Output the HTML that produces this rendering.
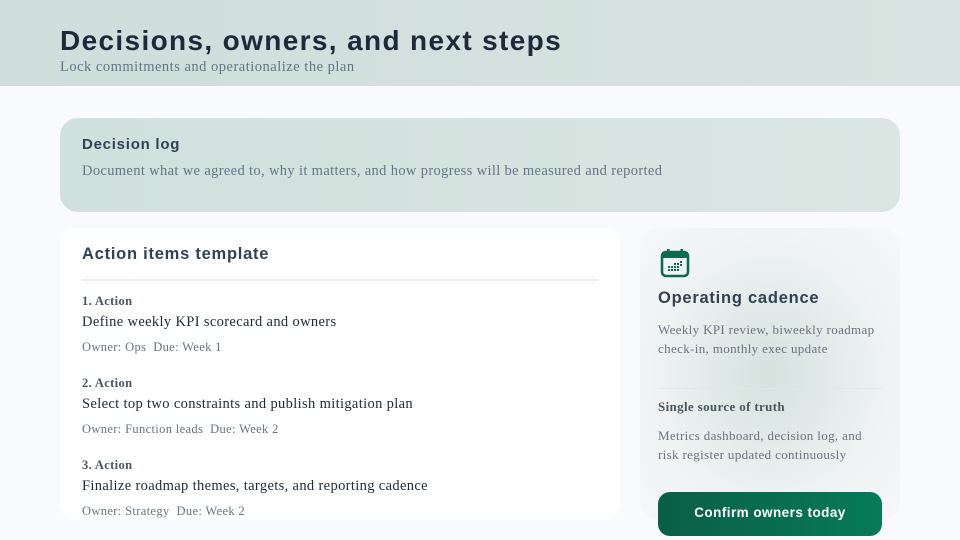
<!DOCTYPE html>
<html><head><meta charset="utf-8"><style>
*{margin:0;padding:0;box-sizing:border-box}
body{width:960px;height:540px;overflow:hidden;background:#f8fafc;position:relative;font-family:"Liberation Serif",serif;letter-spacing:0.35px}
.sans{font-family:"Liberation Sans",sans-serif;font-weight:700;color:#1f2937;letter-spacing:0.75px}
.hdr{position:absolute;left:0;top:0;width:960px;height:86px;background:linear-gradient(90deg,#cfdedb,#d8e4e1)}
.hdr h1{position:absolute;left:60px;top:25px;font-size:28px;color:#1e293b;letter-spacing:1.35px}
.hdr p{position:absolute;left:60px;top:59px;font-size:14.5px;color:#64748b;letter-spacing:0.5px}
.log{position:absolute;left:60px;top:118px;width:840px;height:94px;border-radius:18px;background:linear-gradient(90deg,#d0e0dc,#dbe6e3)}
.log h2{position:absolute;left:22px;top:18px;font-size:15px;color:#334155}
.act{position:absolute;left:60px;top:228px;width:560px;height:292px;background:#fff;border-radius:16px}
.act h2{position:absolute;left:22px;top:17px;font-size:16.5px;color:#334155}
.act .rule{position:absolute;left:22px;top:51px;width:516px;height:2px;background:#eceff1}
.it{position:absolute;left:22px}
.it .n{font-size:12.5px;color:#4b5563;font-weight:700}
.it .t{font-size:14.5px;color:#1f2937;margin-top:5px}
.it .m{font-size:12.5px;color:#6b7280;margin-top:9px}
.cad{position:absolute;left:640px;top:228px;width:260px;height:292px;border-radius:18px;background:radial-gradient(ellipse at 50% 50%,#d4e2de 0%,#eef2f2 60%,#f6f8f9 100%)}
.cad h2{position:absolute;left:18px;top:61px;font-size:16.5px;color:#334155}
.cad p{position:absolute;left:18px;font-size:13px;color:#6b7280;line-height:19px}
.btn{position:absolute;left:658px;top:492px;width:224px;height:44px;border-radius:12px;background:linear-gradient(90deg,#0a5f45,#077a58);color:#fff;font-family:"Liberation Sans",sans-serif;font-weight:700;font-size:13.5px;text-align:center;line-height:42px;letter-spacing:0.45px}
</style></head><body>
<div class="hdr"><h1 class="sans">Decisions, owners, and next steps</h1><p>Lock commitments and operationalize the plan</p></div>
<div class="log"><h2 class="sans">Decision log</h2><p style="position:absolute;left:22px;top:45px;font-size:14.5px;color:#64748b">Document what we agreed to, why it matters, and how progress will be measured and reported</p></div>
<div class="act"><h2 class="sans">Action items template</h2><div class="rule"></div>
<div class="it" style="top:66px"><div class="n">1. Action</div><div class="t">Define weekly KPI scorecard and owners</div><div class="m">Owner: Ops &nbsp;Due: Week 1</div></div>
<div class="it" style="top:148px"><div class="n">2. Action</div><div class="t">Select top two constraints and publish mitigation plan</div><div class="m">Owner: Function leads &nbsp;Due: Week 2</div></div>
<div class="it" style="top:230px"><div class="n">3. Action</div><div class="t">Finalize roadmap themes, targets, and reporting cadence</div><div class="m">Owner: Strategy &nbsp;Due: Week 2</div></div>
</div>
<div class="cad">
<svg style="position:absolute;left:20px;top:20px" width="30" height="30" viewBox="0 0 30 30"><rect x="2" y="4" width="26" height="24" rx="4" fill="none" stroke="#0b6b4c" stroke-width="2.6"/><rect x="2" y="4" width="26" height="6" fill="#0b6b4c"/><rect x="7" y="1" width="2.6" height="6" fill="#0b6b4c"/><rect x="20.4" y="1" width="2.6" height="6" fill="#0b6b4c"/><g fill="#0b6b4c"><rect x="8" y="18" width="2" height="2"/><rect x="11" y="18" width="2" height="2"/><rect x="14" y="15" width="2" height="2"/><rect x="14" y="18" width="2" height="2"/><rect x="17" y="15" width="2" height="2"/><rect x="17" y="18" width="2" height="2"/><rect x="20" y="13" width="2" height="2"/><rect x="20" y="16" width="2" height="2"/><rect x="8" y="21" width="2" height="2"/><rect x="11" y="21" width="2" height="2"/><rect x="14" y="21" width="2" height="2"/><rect x="17" y="21" width="2" height="2"/></g></svg>
<h2 class="sans">Operating cadence</h2>
<p style="top:92px">Weekly KPI review, biweekly roadmap<br>check-in, monthly exec update</p>
<div style="position:absolute;left:18px;top:160px;width:224px;height:1px;background:#e2e8e6"></div>
<p style="top:169px;font-weight:700;color:#4b5563">Single source of truth</p>
<p style="top:198px">Metrics dashboard, decision log, and<br>risk register updated continuously</p>
</div>
<div class="btn">Confirm owners today</div>
</body></html>
